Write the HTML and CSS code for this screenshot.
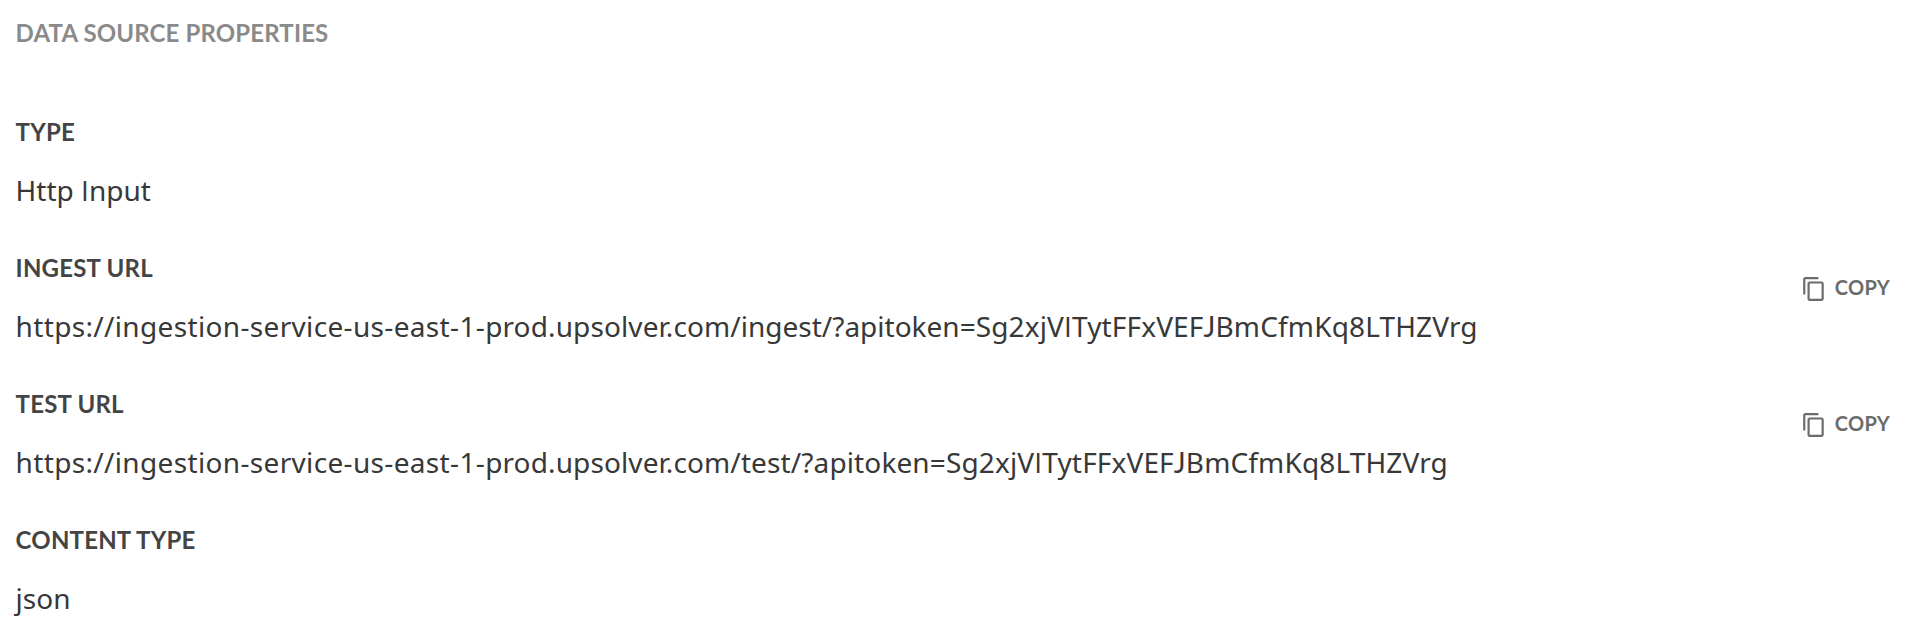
FILE: index.html
```html
<!DOCTYPE html>
<html lang="en">
<head>
<meta charset="utf-8">
<title>Data Source Properties</title>
<link rel="stylesheet" href="styles.css">
</head>
<body>
<main class="panel">
  <h1 class="title">DATA SOURCE PROPERTIES</h1>
  <section class="prop">
    <div class="text">
      <h2 class="label">TYPE</h2>
      <p class="value">Http <span class="plain">I</span>nput</p>
    </div>
  </section>
  <section class="prop">
    <div class="text">
      <h2 class="label">INGEST URL</h2>
      <p class="value"><span class="host">https://ingestion-service-us-east-1-</span><span class="domain">prod.upsolver.com</span><span>/ingest/?apitoken=</span><span class="token">Sg2xjV<span class="plain">I</span>TytFFxVEF<span class="round">J</span>BmCfmKq8LTHZVrg</span></p>
    </div>
    <button class="copy"><svg class="icon" viewBox="0 0 24 24"><path d="M16 1H4c-1.1 0-2 .9-2 2v14h2V3h12V1zm3 4H8c-1.1 0-2 .9-2 2v14c0 1.1.9 2 2 2h11c1.1 0 2-.9 2-2V7c0-1.1-.9-2-2-2zm0 16H8V7h11v14z"/></svg><span class="caption">COPY</span></button>
  </section>
  <section class="prop">
    <div class="text">
      <h2 class="label">TEST URL</h2>
      <p class="value"><span class="host">https://ingestion-service-us-east-1-</span><span class="domain">prod.upsolver.com</span><span class="domain">/test/?apitoken=</span><span class="token">Sg2xjV<span class="plain">I</span>TytFFxVEF<span class="round">J</span>BmCfmKq8LTHZVrg</span></p>
    </div>
    <button class="copy"><svg class="icon" viewBox="0 0 24 24"><path d="M16 1H4c-1.1 0-2 .9-2 2v14h2V3h12V1zm3 4H8c-1.1 0-2 .9-2 2v14c0 1.1.9 2 2 2h11c1.1 0 2-.9 2-2V7c0-1.1-.9-2-2-2zm0 16H8V7h11v14z"/></svg><span class="caption">COPY</span></button>
  </section>
  <section class="prop">
    <div class="text">
      <h2 class="label">CONTENT TYPE</h2>
      <p class="value">json</p>
    </div>
  </section>
</main>
</body>
</html>
```
FILE: styles.css
```css
body {
  margin: 0;
  background: #fff;
  font-family: Lato, sans-serif;
  overflow: hidden;
}
.panel {
  padding: 18px 29px 0 15.6px;
}
.title,
.label {
  margin: 0;
  font-size: 24px;
  line-height: 30px;
  font-weight: 700;
}
.title {
  margin-bottom: 69px;
  letter-spacing: 0.14px;
  color: #8a8a8a;
}
.label {
  letter-spacing: 0.2px;
  color: #444;
}
.prop {
  display: flex;
  justify-content: space-between;
  align-items: flex-start;
  height: 136px;
}
.value {
  margin: 23px 0 0;
  font-family: "Noto Sans", sans-serif;
  font-size: 28px;
  line-height: 40px;
  color: #383838;
  white-space: nowrap;
}
.plain {
  font-family: "Open Sans", sans-serif;
  line-height: 1;
}
.round {
  font-family: Lato, sans-serif;
  line-height: 1;
}
.host {
  letter-spacing: 0.34px;
}
.domain {
  letter-spacing: 0.12px;
}
.token {
  letter-spacing: 0.15px;
}
.copy {
  display: flex;
  align-items: center;
  gap: 8px;
  margin: 22px 0 0;
  padding: 0;
  border: 0;
  background: none;
  color: #6b6b6b;
  font: 700 20px/24px Lato, sans-serif;
  letter-spacing: 0.3px;
}
.caption {
  padding-bottom: 4px;
}
.icon {
  width: 26px;
  height: 26px;
  fill: currentColor;
}
```
